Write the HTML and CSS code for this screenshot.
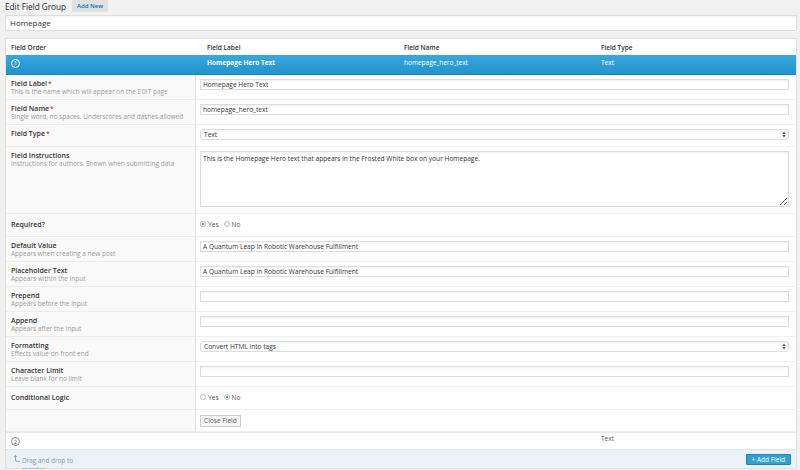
FILE: index.html
```html
<!DOCTYPE html>
<html>
<head>
<meta charset="utf-8">
<link rel="stylesheet" href="styles.css">
</head>
<body>
<div class="page">
  <div class="heading">
    <h1>Edit Field Group</h1>
    <span class="add-new">Add New</span>
  </div>
  <div class="title-input">Homepage</div>

  <div class="fields-box">
    <div class="cols-head">
      <span>Field Order</span><span>Field Label</span><span>Field Name</span><span>Field Type</span>
    </div>
    <div class="field-row open">
      <span><span class="num">1</span></span>
      <span class="strong">Homepage Hero Text</span>
      <span>homepage_hero_text</span>
      <span>Text</span>
    </div>

    <div class="settings">
      <div class="setting">
        <div class="lab"><div class="name">Field Label<span class="req">*</span></div><div class="desc">This is the name which will appear on the EDIT page</div></div>
        <div class="ctrl"><div class="input">Homepage Hero Text</div></div>
      </div>
      <div class="setting">
        <div class="lab"><div class="name">Field Name<span class="req">*</span></div><div class="desc">Single word, no spaces. Underscores and dashes allowed</div></div>
        <div class="ctrl"><div class="input">homepage_hero_text</div></div>
      </div>
      <div class="setting">
        <div class="lab"><div class="name">Field Type<span class="req">*</span></div></div>
        <div class="ctrl"><div class="select"><span>Text</span><svg class="arrows" width="4" height="7" viewBox="0 0 4 7"><path d="M0.3 3 L2 0.6 L3.7 3 Z M0.3 4 L2 6.4 L3.7 4 Z" fill="#555"/></svg></div></div>
      </div>
      <div class="setting">
        <div class="lab"><div class="name">Field Instructions</div><div class="desc">Instructions for authors. Shown when submitting data</div></div>
        <div class="ctrl"><textarea class="textarea" readonly>This is the Homepage Hero text that appears in the Frosted White box on your Homepage.</textarea></div>
      </div>
      <div class="setting">
        <div class="lab lab-radio"><div class="name">Required?</div></div>
        <div class="ctrl ctrl-radio"><span class="radio on"></span><span class="rtext">Yes</span><span class="radio"></span><span class="rtext">No</span></div>
      </div>
      <div class="setting">
        <div class="lab"><div class="name">Default Value</div><div class="desc">Appears when creating a new post</div></div>
        <div class="ctrl"><div class="input">A Quantum Leap in Robotic Warehouse Fulfillment</div></div>
      </div>
      <div class="setting">
        <div class="lab"><div class="name">Placeholder Text</div><div class="desc">Appears within the input</div></div>
        <div class="ctrl"><div class="input">A Quantum Leap in Robotic Warehouse Fulfillment</div></div>
      </div>
      <div class="setting">
        <div class="lab"><div class="name">Prepend</div><div class="desc">Appears before the input</div></div>
        <div class="ctrl"><div class="input"></div></div>
      </div>
      <div class="setting">
        <div class="lab"><div class="name">Append</div><div class="desc">Appears after the input</div></div>
        <div class="ctrl"><div class="input"></div></div>
      </div>
      <div class="setting">
        <div class="lab"><div class="name">Formatting</div><div class="desc">Effects value on front end</div></div>
        <div class="ctrl"><div class="select"><span>Convert HTML into tags</span><svg class="arrows" width="4" height="7" viewBox="0 0 4 7"><path d="M0.3 3 L2 0.6 L3.7 3 Z M0.3 4 L2 6.4 L3.7 4 Z" fill="#555"/></svg></div></div>
      </div>
      <div class="setting">
        <div class="lab"><div class="name">Character Limit</div><div class="desc">Leave blank for no limit</div></div>
        <div class="ctrl"><div class="input"></div></div>
      </div>
      <div class="setting">
        <div class="lab lab-radio"><div class="name">Conditional Logic</div></div>
        <div class="ctrl ctrl-radio"><span class="radio"></span><span class="rtext">Yes</span><span class="radio on"></span><span class="rtext">No</span></div>
      </div>
      <div class="setting">
        <div class="lab"></div>
        <div class="ctrl ctrl-btn"><span class="close-btn">Close Field</span></div>
      </div>
    </div>

    <div class="field-row second">
      <span><span class="num">2</span></span>
      <span></span>
      <span></span>
      <span>Text</span>
    </div>

    <div class="footer">
      <div class="drag">
        <svg class="drag-icon" width="6" height="7" viewBox="0 0 6 7"><path d="M1.5 0.5 L0 2.2 M1.5 0.5 L3 2.2 M1.5 0.5 V5 Q1.5 6.3 3 6.3 H6" fill="none" stroke="#6f8fae" stroke-width="0.8"/></svg>
        <span class="drag-text">Drag and drop to reorder</span>
      </div>
      <span class="add-field">+ Add Field</span>
    </div>
  </div>
</div>
</body>
</html>
```

FILE: styles.css
```css
* { box-sizing: border-box; }

body {
  margin: 0;
  background: #f1f1f1;
  font-family: "Open Sans", "DejaVu Sans", sans-serif;
  color: #333;
}

.page {
  padding: 0 3px 0 5px;
}

.heading {
  display: flex;
  align-items: center;
  gap: 6px;
  height: 13px;
}

h1 {
  margin: 0;
  font-size: 8.2px;
  font-weight: 400;
  line-height: 13px;
  color: #23282d;
}

.add-new {
  background: #e0e0e0;
  color: #0073aa;
  font-size: 6px;
  font-weight: 600;
  line-height: 12px;
  padding: 0 5px;
  align-self: flex-start;
}

.title-input {
  margin-top: 2px;
  height: 16px;
  border: 1px solid #ddd;
  background: #fff;
  font-size: 8px;
  line-height: 14px;
  padding: 0 4px;
  color: #333;
  box-shadow: inset 0 1px 2px rgba(0,0,0,0.05);
}

.fields-box {
  margin-top: 7px;
  border: 1px solid #e1e1e1;
  background: #fff;
}

.cols-head,
.field-row {
  display: grid;
  grid-template-columns: 196px 197px 197px 1fr;
  font-size: 6.5px;
}

.cols-head {
  height: 16px;
  align-items: center;
  font-weight: 600;
  color: #333;
}

.cols-head span,
.field-row > span {
  padding-left: 5px;
}

.field-row.open {
  height: 20px;
  padding-top: 3px;
  background: linear-gradient(#38a8dc, #2293cc);
  color: #fff;
  border-bottom: 1px solid #1f86bb;
}

.field-row.open > span {
  color: #fff;
}

.field-row .strong {
  font-weight: 700;
}

.num {
  display: inline-flex;
  align-items: center;
  justify-content: center;
  width: 9px;
  height: 9px;
  border: 1px solid #fff;
  border-radius: 50%;
  font-size: 6px;
  line-height: 1;
}

.field-row.second {
  height: 17px;
  padding-top: 1px;
  align-items: start;
  color: #555;
  font-size: 6.5px;
  border-top: 1px solid #e8e8e8;
}

.field-row.second .num {
  border-color: #888;
  color: #555;
  margin-top: 3px;
}

.setting {
  display: grid;
  grid-template-columns: 190px 1fr;
}

.lab {
  background: #f9f9f9;
  border-right: 1px solid #e1e1e1;
  border-bottom: 1px solid #ececec;
  padding: 5px 6px 3px 5px;
}

.lab-radio {
  padding-top: 7px;
}

.name {
  font-size: 7px;
  line-height: 8px;
  font-weight: 600;
  color: #333;
}

.req {
  color: #d54e21;
  margin-left: 1px;
}

.desc {
  font-size: 6.5px;
  line-height: 8px;
  color: #999;
  white-space: nowrap;
}

.ctrl {
  border-bottom: 1px solid #f0f0f0;
  padding: 4px 7px 6px 4px;
}

.input,
.select {
  height: 11px;
  border: 1px solid #ddd;
  background: #fff;
  font-size: 6.6px;
  line-height: 9px;
  padding: 0 2px;
  color: #333;
  box-shadow: inset 0 1px 2px rgba(0,0,0,0.06);
  white-space: nowrap;
  overflow: hidden;
}

.select {
  display: flex;
  justify-content: space-between;
  align-items: center;
  border-radius: 3px;
  padding: 0 2px 0 3px;
}

.arrows {
  display: block;
}

.textarea {
  display: block;
  width: 100%;
  height: 56px;
  margin: 0;
  border: 1px solid #ddd;
  background: #fff;
  font-family: "Open Sans", "DejaVu Sans", sans-serif;
  font-size: 6.6px;
  line-height: 9px;
  padding: 2px 2px;
  color: #333;
  resize: vertical;
  box-shadow: inset 0 1px 2px rgba(0,0,0,0.06);
}

.ctrl-radio {
  display: flex;
  align-items: center;
  height: 23px;
  padding-top: 4px;
  font-size: 6.6px;
  color: #555;
}

.radio {
  width: 6px;
  height: 6px;
  border: 1px solid #bbb;
  border-radius: 50%;
  background: #fff;
  margin-right: 2px;
  display: inline-flex;
  align-items: center;
  justify-content: center;
}

.radio.on::after {
  content: "";
  width: 2px;
  height: 2px;
  border-radius: 50%;
  background: #1e8cbe;
}

.rtext {
  margin-right: 5px;
}

.ctrl-btn {
  display: flex;
  align-items: flex-start;
  padding-top: 5px;
  padding-bottom: 4px;
}

.close-btn {
  display: block;
  height: 12px;
  border: 1px solid #ccc;
  background: #f7f7f7;
  font-size: 6.6px;
  line-height: 10px;
  padding: 0 3px;
  color: #555;
}

.footer {
  height: 19px;
  background: #eaf2f8;
  border-top: 1px solid #dbe6ef;
  display: flex;
  justify-content: space-between;
  align-items: flex-start;
  padding: 3px 5px 0 8px;
}

.drag {
  display: flex;
  align-items: flex-start;
  gap: 2px;
  width: 64px;
}

.drag-icon {
  margin-top: 2px;
  flex: none;
}

.drag-text {
  font-size: 6.4px;
  line-height: 9px;
  color: #7b97b3;
  margin-top: 3px;
}

.add-field {
  background: #2ea2cc;
  color: #fff;
  font-size: 6.5px;
  line-height: 9px;
  padding: 0 5px;
  border: 1px solid #2189b8;
  border-radius: 1px;
  margin-top: 1px;
}
```
